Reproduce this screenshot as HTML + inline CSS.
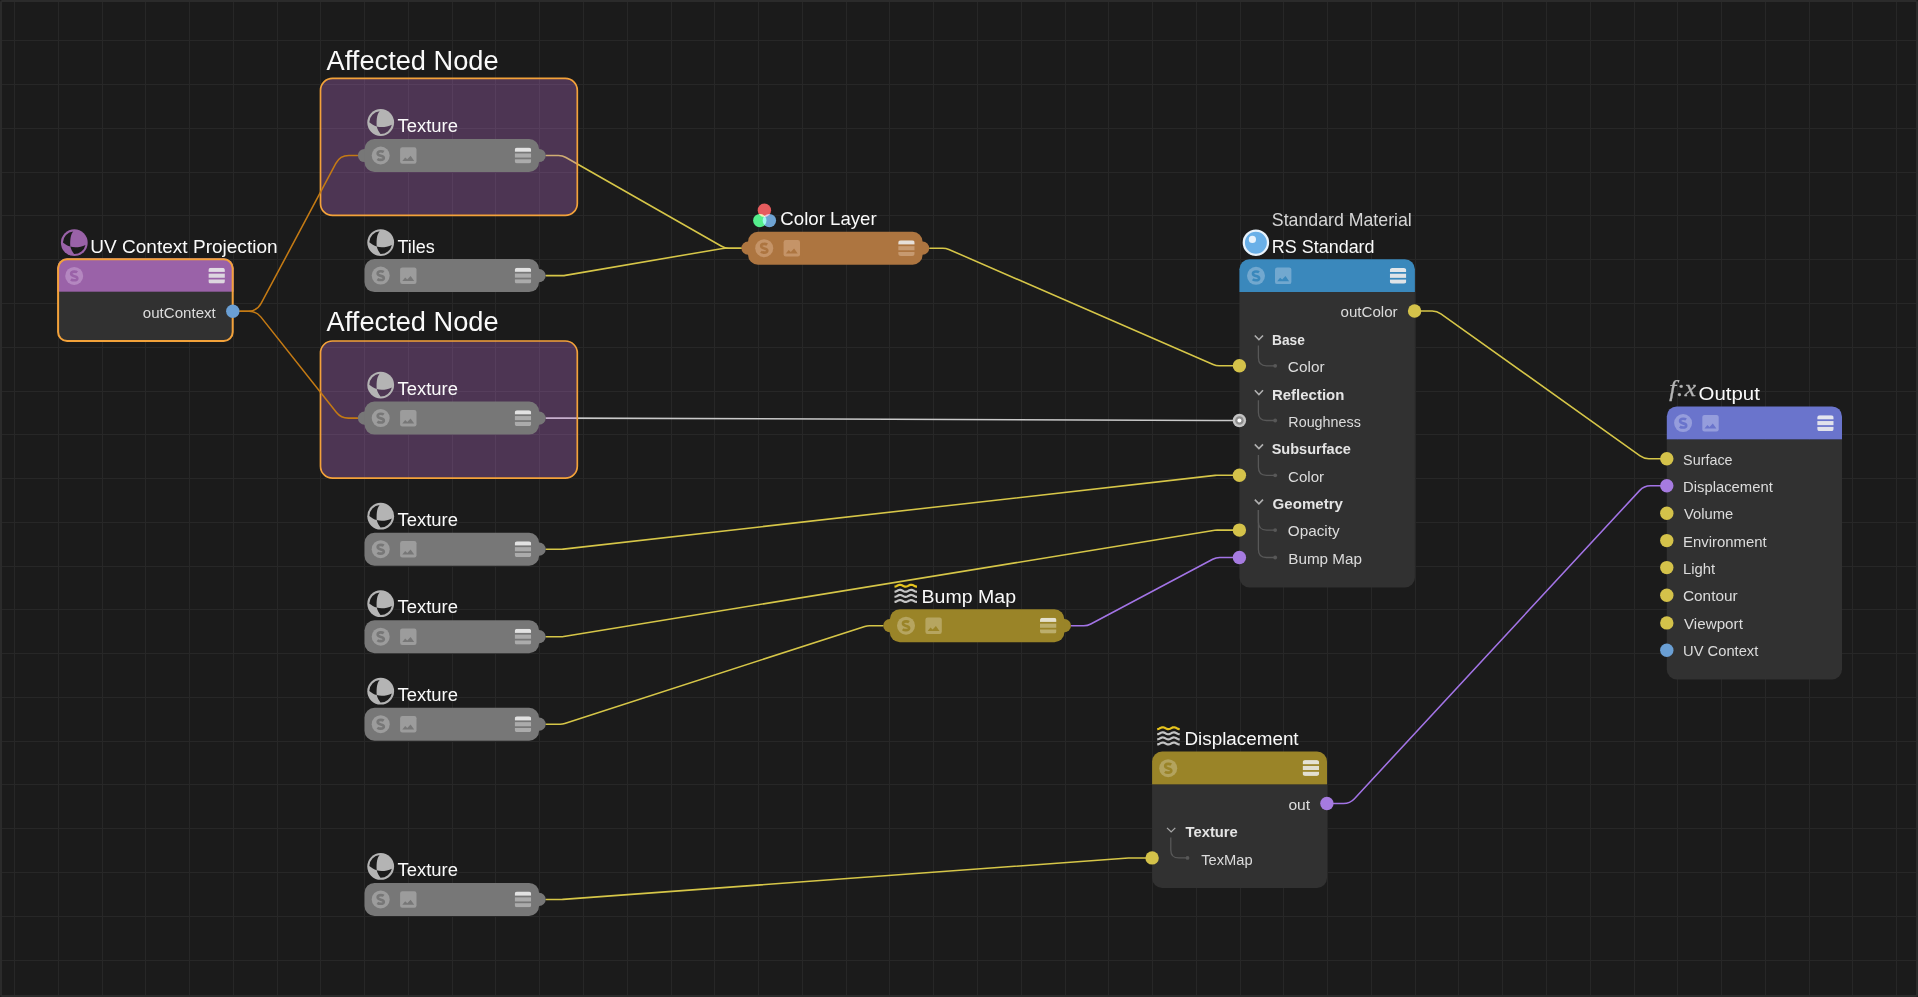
<!DOCTYPE html>
<html><head><meta charset="utf-8"><title>Node Editor</title>
<style>html,body{margin:0;padding:0;background:#1b1b1b;overflow:hidden;width:1918px;height:997px}svg{display:block}</style>
</head><body><svg width="1918" height="997" viewBox="0 0 1918 997"><rect x="0" y="0" width="1918" height="997" fill="#1b1b1b"/><rect x="14" y="0" width="1" height="997" fill="#272727"/><rect x="58" y="0" width="1" height="997" fill="#272727"/><rect x="102" y="0" width="1" height="997" fill="#272727"/><rect x="145" y="0" width="1" height="997" fill="#272727"/><rect x="189" y="0" width="1" height="997" fill="#272727"/><rect x="233" y="0" width="1" height="997" fill="#272727"/><rect x="277" y="0" width="1" height="997" fill="#272727"/><rect x="320" y="0" width="1" height="997" fill="#272727"/><rect x="364" y="0" width="1" height="997" fill="#272727"/><rect x="408" y="0" width="1" height="997" fill="#272727"/><rect x="452" y="0" width="1" height="997" fill="#272727"/><rect x="495" y="0" width="1" height="997" fill="#272727"/><rect x="539" y="0" width="1" height="997" fill="#272727"/><rect x="583" y="0" width="1" height="997" fill="#272727"/><rect x="627" y="0" width="1" height="997" fill="#272727"/><rect x="671" y="0" width="1" height="997" fill="#272727"/><rect x="714" y="0" width="1" height="997" fill="#272727"/><rect x="758" y="0" width="1" height="997" fill="#272727"/><rect x="802" y="0" width="1" height="997" fill="#272727"/><rect x="846" y="0" width="1" height="997" fill="#272727"/><rect x="889" y="0" width="1" height="997" fill="#272727"/><rect x="933" y="0" width="1" height="997" fill="#272727"/><rect x="977" y="0" width="1" height="997" fill="#272727"/><rect x="1021" y="0" width="1" height="997" fill="#272727"/><rect x="1065" y="0" width="1" height="997" fill="#272727"/><rect x="1108" y="0" width="1" height="997" fill="#272727"/><rect x="1152" y="0" width="1" height="997" fill="#272727"/><rect x="1196" y="0" width="1" height="997" fill="#272727"/><rect x="1240" y="0" width="1" height="997" fill="#272727"/><rect x="1283" y="0" width="1" height="997" fill="#272727"/><rect x="1327" y="0" width="1" height="997" fill="#272727"/><rect x="1371" y="0" width="1" height="997" fill="#272727"/><rect x="1415" y="0" width="1" height="997" fill="#272727"/><rect x="1458" y="0" width="1" height="997" fill="#272727"/><rect x="1502" y="0" width="1" height="997" fill="#272727"/><rect x="1546" y="0" width="1" height="997" fill="#272727"/><rect x="1590" y="0" width="1" height="997" fill="#272727"/><rect x="1634" y="0" width="1" height="997" fill="#272727"/><rect x="1677" y="0" width="1" height="997" fill="#272727"/><rect x="1721" y="0" width="1" height="997" fill="#272727"/><rect x="1765" y="0" width="1" height="997" fill="#272727"/><rect x="1809" y="0" width="1" height="997" fill="#272727"/><rect x="1852" y="0" width="1" height="997" fill="#272727"/><rect x="1896" y="0" width="1" height="997" fill="#272727"/><rect x="0" y="40" width="1918" height="1" fill="#272727"/><rect x="0" y="84" width="1918" height="1" fill="#272727"/><rect x="0" y="128" width="1918" height="1" fill="#272727"/><rect x="0" y="172" width="1918" height="1" fill="#272727"/><rect x="0" y="215" width="1918" height="1" fill="#272727"/><rect x="0" y="259" width="1918" height="1" fill="#272727"/><rect x="0" y="303" width="1918" height="1" fill="#272727"/><rect x="0" y="347" width="1918" height="1" fill="#272727"/><rect x="0" y="391" width="1918" height="1" fill="#272727"/><rect x="0" y="434" width="1918" height="1" fill="#272727"/><rect x="0" y="478" width="1918" height="1" fill="#272727"/><rect x="0" y="522" width="1918" height="1" fill="#272727"/><rect x="0" y="566" width="1918" height="1" fill="#272727"/><rect x="0" y="609" width="1918" height="1" fill="#272727"/><rect x="0" y="653" width="1918" height="1" fill="#272727"/><rect x="0" y="697" width="1918" height="1" fill="#272727"/><rect x="0" y="741" width="1918" height="1" fill="#272727"/><rect x="0" y="784" width="1918" height="1" fill="#272727"/><rect x="0" y="828" width="1918" height="1" fill="#272727"/><rect x="0" y="872" width="1918" height="1" fill="#272727"/><rect x="0" y="916" width="1918" height="1" fill="#272727"/><rect x="0" y="960" width="1918" height="1" fill="#272727"/><rect x="1" y="1" width="1916" height="995" rx="1.5" fill="none" stroke="#2b2b2b" stroke-width="2"/><path d="M546,155.5 L558.52,155.50 A15.00,15.00 0 0 1 565.95,157.47 L721.55,246.23 A15.00,15.00 0 0 0 728.98,248.20 L741.3,248.2" fill="none" stroke="#d6c648" stroke-width="1.55" stroke-linecap="round" stroke-linejoin="round"/><path d="M546,418.1 L562.47,418.10 A15.00,15.00 0 0 1 562.53,418.10 L1215.97,420.50 A15.00,15.00 0 0 0 1216.03,420.50 L1239.3,420.5" fill="none" stroke="#c9c9c9" stroke-width="1.55" stroke-linecap="round" stroke-linejoin="round"/><rect x="320.5" y="78.4" width="256.8" height="137.0" rx="12" fill="rgba(194,117,214,0.30)" stroke="#f3a23a" stroke-width="1.7"/><text transform="translate(326.60,69.8) scale(0.9722,1)" x="0" y="0" font-family="'Liberation Sans', sans-serif" font-size="28" font-weight="400" fill="#fafafa">Affected Node</text><rect x="320.5" y="341.0" width="256.8" height="137.2" rx="12" fill="rgba(194,117,214,0.30)" stroke="#f3a23a" stroke-width="1.7"/><text transform="translate(326.60,331.4) scale(0.9722,1)" x="0" y="0" font-family="'Liberation Sans', sans-serif" font-size="28" font-weight="400" fill="#fafafa">Affected Node</text><path d="M239.5,311.2 L248.25,311.20 A14.58,14.58 0 0 0 261.12,303.48 L335.84,163.31 A14.75,14.75 0 0 1 348.85,155.50 L357.7,155.5" fill="none" stroke="#c47a14" stroke-width="1.55" stroke-linecap="round" stroke-linejoin="round"/><path d="M239.5,311.2 L249.05,311.20 A15.00,15.00 0 0 1 260.80,316.88 L336.50,412.42 A15.00,15.00 0 0 0 348.25,418.10 L357.7,418.1" fill="none" stroke="#c47a14" stroke-width="1.55" stroke-linecap="round" stroke-linejoin="round"/><path d="M546,275.6 L562.72,275.60 A15.00,15.00 0 0 0 565.26,275.38 L722.74,248.42 A15.00,15.00 0 0 1 725.28,248.20 L741.3,248.2" fill="none" stroke="#d6c648" stroke-width="1.55" stroke-linecap="round" stroke-linejoin="round"/><path d="M929.8,248.2 L942.88,248.20 A15.00,15.00 0 0 1 948.86,249.45 L1213.14,364.55 A15.00,15.00 0 0 0 1219.12,365.80 L1239.3,365.8" fill="none" stroke="#d6c648" stroke-width="1.55" stroke-linecap="round" stroke-linejoin="round"/><path d="M546,549.2 L561.65,549.20 A15.00,15.00 0 0 0 563.34,549.11 L1215.16,475.39 A15.00,15.00 0 0 1 1216.85,475.30 L1239.3,475.3" fill="none" stroke="#d6c648" stroke-width="1.55" stroke-linecap="round" stroke-linejoin="round"/><path d="M546,636.7 L561.28,636.70 A15.00,15.00 0 0 0 563.70,636.50 L1214.80,530.30 A15.00,15.00 0 0 1 1217.22,530.10 L1239.3,530.1" fill="none" stroke="#d6c648" stroke-width="1.55" stroke-linecap="round" stroke-linejoin="round"/><path d="M546,724.2 L560.13,724.20 A15.00,15.00 0 0 0 564.75,723.47 L864.75,626.43 A15.00,15.00 0 0 1 869.37,625.70 L883,625.7" fill="none" stroke="#d6c648" stroke-width="1.55" stroke-linecap="round" stroke-linejoin="round"/><path d="M1071.3,625.7 L1083.77,625.70 A15.00,15.00 0 0 0 1090.80,623.95 L1212.70,559.25 A15.00,15.00 0 0 1 1219.73,557.50 L1239.3,557.5" fill="none" stroke="#a374e6" stroke-width="1.55" stroke-linecap="round" stroke-linejoin="round"/><path d="M1414.5,311 L1432.20,311.00 A15.00,15.00 0 0 1 1440.91,313.79 L1640.09,455.91 A15.00,15.00 0 0 0 1648.80,458.70 L1666.8,458.7" fill="none" stroke="#d6c648" stroke-width="1.55" stroke-linecap="round" stroke-linejoin="round"/><path d="M1326.8,803.5 L1343.44,803.50 A15.00,15.00 0 0 0 1354.45,798.69 L1639.55,490.61 A15.00,15.00 0 0 1 1650.56,485.80 L1666.8,485.8" fill="none" stroke="#a374e6" stroke-width="1.55" stroke-linecap="round" stroke-linejoin="round"/><path d="M546,899.4 L561.95,899.40 A15.00,15.00 0 0 0 563.05,899.36 L1128.45,857.94 A15.00,15.00 0 0 1 1129.55,857.90 L1152,857.9" fill="none" stroke="#d6c648" stroke-width="1.55" stroke-linecap="round" stroke-linejoin="round"/><circle cx="380.7" cy="122.5" r="13.4" fill="#b4b4b4"/><path d="M379.70,111.20 C377.30,113.90 376.30,118.30 376.70,126.40 C374.10,125.50 371.50,124.10 369.30,122.20 A11.4,11.4 0 0 1 379.70,111.20 Z" fill="#4d3653"/><path d="M376.70,126.40 C380.90,127.80 387.30,127.10 391.85,124.80 A11.4,11.4 0 0 1 380.50,133.90 C378.80,131.70 377.40,129.10 376.70,126.40 Z" fill="#4d3653"/><text transform="translate(397.50,132.0) scale(0.9710,1)" x="0" y="0" font-family="'Liberation Sans', sans-serif" font-size="19" font-weight="400" fill="#fafafa">Texture</text><circle cx="364.5" cy="155.5" r="6.6" fill="#777777"/><circle cx="539.1" cy="155.5" r="6.6" fill="#777777"/><rect x="364.5" y="139.0" width="174.6" height="33.0" rx="10" fill="#777777"/><circle cx="380.7" cy="155.5" r="9" fill="#9c9c9c"/><path d="M383.74,151.91 C383.00,151.36 381.90,151.18 380.79,151.18 C378.77,151.18 377.66,152.19 377.66,153.38 C377.66,154.95 379.14,155.41 380.79,155.78 C382.54,156.14 383.83,156.70 383.83,158.08 C383.83,159.46 382.54,159.92 380.61,159.92 C379.32,159.92 378.12,159.55 377.39,159.00" fill="none" stroke="#777777" stroke-width="2.6"/><rect x="400.1" y="147.3" width="16.4" height="16.5" rx="2.2" fill="#9c9c9c"/><path d="M402.3,160.9 L405.20000000000005,157.4 L407.3,159.3 L410.6,155.8 L414.20000000000005,160.9 Z" fill="#777777"/><clipPath id="mc5147_1555"><rect x="514.7" y="147.6" width="16.5" height="15.8" rx="2.6"/></clipPath><g clip-path="url(#mc5147_1555)"><rect x="514.7" y="147.6" width="16.5" height="4.1" fill="#e2e2e2"/><rect x="514.7" y="153.45" width="16.5" height="4.1" fill="#ababab"/><rect x="514.7" y="159.29999999999998" width="16.5" height="4.1" fill="#ababab"/></g><circle cx="380.7" cy="242.60000000000002" r="13.4" fill="#b4b4b4"/><path d="M379.70,231.30 C377.30,234.00 376.30,238.40 376.70,246.50 C374.10,245.60 371.50,244.20 369.30,242.30 A11.4,11.4 0 0 1 379.70,231.30 Z" fill="#1b1b1b"/><path d="M376.70,246.50 C380.90,247.90 387.30,247.20 391.85,244.90 A11.4,11.4 0 0 1 380.50,254.00 C378.80,251.80 377.40,249.20 376.70,246.50 Z" fill="#1b1b1b"/><text transform="translate(397.50,252.70000000000002) scale(0.9487,1)" x="0" y="0" font-family="'Liberation Sans', sans-serif" font-size="19" font-weight="400" fill="#fafafa">Tiles</text><circle cx="539.1" cy="275.6" r="6.6" fill="#777777"/><rect x="364.5" y="259.1" width="174.6" height="33.0" rx="10" fill="#777777"/><circle cx="380.7" cy="275.6" r="9" fill="#9c9c9c"/><path d="M383.74,272.01 C383.00,271.46 381.90,271.28 380.79,271.28 C378.77,271.28 377.66,272.29 377.66,273.48 C377.66,275.05 379.14,275.51 380.79,275.88 C382.54,276.24 383.83,276.80 383.83,278.18 C383.83,279.56 382.54,280.02 380.61,280.02 C379.32,280.02 378.12,279.65 377.39,279.10" fill="none" stroke="#777777" stroke-width="2.6"/><rect x="400.1" y="267.40000000000003" width="16.4" height="16.5" rx="2.2" fill="#9c9c9c"/><path d="M402.3,281.00000000000006 L405.20000000000005,277.50000000000006 L407.3,279.40000000000003 L410.6,275.90000000000003 L414.20000000000005,281.00000000000006 Z" fill="#777777"/><clipPath id="mc5147_2756"><rect x="514.7" y="267.70000000000005" width="16.5" height="15.8" rx="2.6"/></clipPath><g clip-path="url(#mc5147_2756)"><rect x="514.7" y="267.70000000000005" width="16.5" height="4.1" fill="#e2e2e2"/><rect x="514.7" y="273.55000000000007" width="16.5" height="4.1" fill="#ababab"/><rect x="514.7" y="279.40000000000003" width="16.5" height="4.1" fill="#ababab"/></g><circle cx="380.7" cy="385.1" r="13.4" fill="#b4b4b4"/><path d="M379.70,373.80 C377.30,376.50 376.30,380.90 376.70,389.00 C374.10,388.10 371.50,386.70 369.30,384.80 A11.4,11.4 0 0 1 379.70,373.80 Z" fill="#4d3653"/><path d="M376.70,389.00 C380.90,390.40 387.30,389.70 391.85,387.40 A11.4,11.4 0 0 1 380.50,396.50 C378.80,394.30 377.40,391.70 376.70,389.00 Z" fill="#4d3653"/><text transform="translate(397.50,394.6) scale(0.9710,1)" x="0" y="0" font-family="'Liberation Sans', sans-serif" font-size="19" font-weight="400" fill="#fafafa">Texture</text><circle cx="364.5" cy="418.1" r="6.6" fill="#777777"/><circle cx="539.1" cy="418.1" r="6.6" fill="#777777"/><rect x="364.5" y="401.6" width="174.6" height="33.0" rx="10" fill="#777777"/><circle cx="380.7" cy="418.1" r="9" fill="#9c9c9c"/><path d="M383.74,414.51 C383.00,413.96 381.90,413.78 380.79,413.78 C378.77,413.78 377.66,414.79 377.66,415.98 C377.66,417.55 379.14,418.01 380.79,418.38 C382.54,418.74 383.83,419.30 383.83,420.68 C383.83,422.06 382.54,422.52 380.61,422.52 C379.32,422.52 378.12,422.15 377.39,421.60" fill="none" stroke="#777777" stroke-width="2.6"/><rect x="400.1" y="409.90000000000003" width="16.4" height="16.5" rx="2.2" fill="#9c9c9c"/><path d="M402.3,423.50000000000006 L405.20000000000005,420.00000000000006 L407.3,421.90000000000003 L410.6,418.40000000000003 L414.20000000000005,423.50000000000006 Z" fill="#777777"/><clipPath id="mc5147_4181"><rect x="514.7" y="410.20000000000005" width="16.5" height="15.8" rx="2.6"/></clipPath><g clip-path="url(#mc5147_4181)"><rect x="514.7" y="410.20000000000005" width="16.5" height="4.1" fill="#e2e2e2"/><rect x="514.7" y="416.05000000000007" width="16.5" height="4.1" fill="#ababab"/><rect x="514.7" y="421.90000000000003" width="16.5" height="4.1" fill="#ababab"/></g><circle cx="380.7" cy="516.2" r="13.4" fill="#b4b4b4"/><path d="M379.70,504.90 C377.30,507.60 376.30,512.00 376.70,520.10 C374.10,519.20 371.50,517.80 369.30,515.90 A11.4,11.4 0 0 1 379.70,504.90 Z" fill="#1b1b1b"/><path d="M376.70,520.10 C380.90,521.50 387.30,520.80 391.85,518.50 A11.4,11.4 0 0 1 380.50,527.60 C378.80,525.40 377.40,522.80 376.70,520.10 Z" fill="#1b1b1b"/><text transform="translate(397.50,525.7) scale(0.9710,1)" x="0" y="0" font-family="'Liberation Sans', sans-serif" font-size="19" font-weight="400" fill="#fafafa">Texture</text><circle cx="539.1" cy="549.2" r="6.6" fill="#777777"/><rect x="364.5" y="532.7" width="174.6" height="33.0" rx="10" fill="#777777"/><circle cx="380.7" cy="549.2" r="9" fill="#9c9c9c"/><path d="M383.74,545.61 C383.00,545.06 381.90,544.88 380.79,544.88 C378.77,544.88 377.66,545.89 377.66,547.08 C377.66,548.65 379.14,549.11 380.79,549.48 C382.54,549.84 383.83,550.40 383.83,551.78 C383.83,553.16 382.54,553.62 380.61,553.62 C379.32,553.62 378.12,553.25 377.39,552.70" fill="none" stroke="#777777" stroke-width="2.6"/><rect x="400.1" y="541.0" width="16.4" height="16.5" rx="2.2" fill="#9c9c9c"/><path d="M402.3,554.6 L405.20000000000005,551.1 L407.3,553.0 L410.6,549.5 L414.20000000000005,554.6 Z" fill="#777777"/><clipPath id="mc5147_5492"><rect x="514.7" y="541.3000000000001" width="16.5" height="15.8" rx="2.6"/></clipPath><g clip-path="url(#mc5147_5492)"><rect x="514.7" y="541.3000000000001" width="16.5" height="4.1" fill="#e2e2e2"/><rect x="514.7" y="547.1500000000001" width="16.5" height="4.1" fill="#ababab"/><rect x="514.7" y="553.0000000000001" width="16.5" height="4.1" fill="#ababab"/></g><circle cx="380.7" cy="603.7" r="13.4" fill="#b4b4b4"/><path d="M379.70,592.40 C377.30,595.10 376.30,599.50 376.70,607.60 C374.10,606.70 371.50,605.30 369.30,603.40 A11.4,11.4 0 0 1 379.70,592.40 Z" fill="#1b1b1b"/><path d="M376.70,607.60 C380.90,609.00 387.30,608.30 391.85,606.00 A11.4,11.4 0 0 1 380.50,615.10 C378.80,612.90 377.40,610.30 376.70,607.60 Z" fill="#1b1b1b"/><text transform="translate(397.50,613.2) scale(0.9710,1)" x="0" y="0" font-family="'Liberation Sans', sans-serif" font-size="19" font-weight="400" fill="#fafafa">Texture</text><circle cx="539.1" cy="636.7" r="6.6" fill="#777777"/><rect x="364.5" y="620.2" width="174.6" height="33.0" rx="10" fill="#777777"/><circle cx="380.7" cy="636.7" r="9" fill="#9c9c9c"/><path d="M383.74,633.11 C383.00,632.56 381.90,632.38 380.79,632.38 C378.77,632.38 377.66,633.39 377.66,634.58 C377.66,636.15 379.14,636.61 380.79,636.98 C382.54,637.34 383.83,637.90 383.83,639.28 C383.83,640.66 382.54,641.12 380.61,641.12 C379.32,641.12 378.12,640.75 377.39,640.20" fill="none" stroke="#777777" stroke-width="2.6"/><rect x="400.1" y="628.5" width="16.4" height="16.5" rx="2.2" fill="#9c9c9c"/><path d="M402.3,642.1 L405.20000000000005,638.6 L407.3,640.5 L410.6,637.0 L414.20000000000005,642.1 Z" fill="#777777"/><clipPath id="mc5147_6367"><rect x="514.7" y="628.8000000000001" width="16.5" height="15.8" rx="2.6"/></clipPath><g clip-path="url(#mc5147_6367)"><rect x="514.7" y="628.8000000000001" width="16.5" height="4.1" fill="#e2e2e2"/><rect x="514.7" y="634.6500000000001" width="16.5" height="4.1" fill="#ababab"/><rect x="514.7" y="640.5000000000001" width="16.5" height="4.1" fill="#ababab"/></g><circle cx="380.7" cy="691.2" r="13.4" fill="#b4b4b4"/><path d="M379.70,679.90 C377.30,682.60 376.30,687.00 376.70,695.10 C374.10,694.20 371.50,692.80 369.30,690.90 A11.4,11.4 0 0 1 379.70,679.90 Z" fill="#1b1b1b"/><path d="M376.70,695.10 C380.90,696.50 387.30,695.80 391.85,693.50 A11.4,11.4 0 0 1 380.50,702.60 C378.80,700.40 377.40,697.80 376.70,695.10 Z" fill="#1b1b1b"/><text transform="translate(397.50,700.7) scale(0.9710,1)" x="0" y="0" font-family="'Liberation Sans', sans-serif" font-size="19" font-weight="400" fill="#fafafa">Texture</text><circle cx="539.1" cy="724.2" r="6.6" fill="#777777"/><rect x="364.5" y="707.7" width="174.6" height="33.0" rx="10" fill="#777777"/><circle cx="380.7" cy="724.2" r="9" fill="#9c9c9c"/><path d="M383.74,720.61 C383.00,720.06 381.90,719.88 380.79,719.88 C378.77,719.88 377.66,720.89 377.66,722.08 C377.66,723.65 379.14,724.11 380.79,724.48 C382.54,724.84 383.83,725.40 383.83,726.78 C383.83,728.16 382.54,728.62 380.61,728.62 C379.32,728.62 378.12,728.25 377.39,727.70" fill="none" stroke="#777777" stroke-width="2.6"/><rect x="400.1" y="716.0" width="16.4" height="16.5" rx="2.2" fill="#9c9c9c"/><path d="M402.3,729.6 L405.20000000000005,726.1 L407.3,728.0 L410.6,724.5 L414.20000000000005,729.6 Z" fill="#777777"/><clipPath id="mc5147_7242"><rect x="514.7" y="716.3000000000001" width="16.5" height="15.8" rx="2.6"/></clipPath><g clip-path="url(#mc5147_7242)"><rect x="514.7" y="716.3000000000001" width="16.5" height="4.1" fill="#e2e2e2"/><rect x="514.7" y="722.1500000000001" width="16.5" height="4.1" fill="#ababab"/><rect x="514.7" y="728.0000000000001" width="16.5" height="4.1" fill="#ababab"/></g><circle cx="380.7" cy="866.4" r="13.4" fill="#b4b4b4"/><path d="M379.70,855.10 C377.30,857.80 376.30,862.20 376.70,870.30 C374.10,869.40 371.50,868.00 369.30,866.10 A11.4,11.4 0 0 1 379.70,855.10 Z" fill="#1b1b1b"/><path d="M376.70,870.30 C380.90,871.70 387.30,871.00 391.85,868.70 A11.4,11.4 0 0 1 380.50,877.80 C378.80,875.60 377.40,873.00 376.70,870.30 Z" fill="#1b1b1b"/><text transform="translate(397.50,875.9) scale(0.9710,1)" x="0" y="0" font-family="'Liberation Sans', sans-serif" font-size="19" font-weight="400" fill="#fafafa">Texture</text><circle cx="539.1" cy="899.4" r="6.6" fill="#777777"/><rect x="364.5" y="882.9" width="174.6" height="33.0" rx="10" fill="#777777"/><circle cx="380.7" cy="899.4" r="9" fill="#9c9c9c"/><path d="M383.74,895.81 C383.00,895.26 381.90,895.08 380.79,895.08 C378.77,895.08 377.66,896.09 377.66,897.28 C377.66,898.85 379.14,899.31 380.79,899.68 C382.54,900.04 383.83,900.60 383.83,901.98 C383.83,903.36 382.54,903.82 380.61,903.82 C379.32,903.82 378.12,903.45 377.39,902.90" fill="none" stroke="#777777" stroke-width="2.6"/><rect x="400.1" y="891.1999999999999" width="16.4" height="16.5" rx="2.2" fill="#9c9c9c"/><path d="M402.3,904.8 L405.20000000000005,901.3 L407.3,903.1999999999999 L410.6,899.6999999999999 L414.20000000000005,904.8 Z" fill="#777777"/><clipPath id="mc5147_8994"><rect x="514.7" y="891.5" width="16.5" height="15.8" rx="2.6"/></clipPath><g clip-path="url(#mc5147_8994)"><rect x="514.7" y="891.5" width="16.5" height="4.1" fill="#e2e2e2"/><rect x="514.7" y="897.35" width="16.5" height="4.1" fill="#ababab"/><rect x="514.7" y="903.2" width="16.5" height="4.1" fill="#ababab"/></g><g><g style="isolation:isolate"><circle cx="764.4" cy="210.2" r="6.7" fill="#e65c5e" style="mix-blend-mode:screen"/><circle cx="759.8" cy="220.6" r="6.7" fill="#55ee8c" style="mix-blend-mode:screen"/><circle cx="769.4" cy="220.6" r="6.7" fill="#6ea3d3" style="mix-blend-mode:screen"/></g><text transform="translate(780.32,225) scale(0.9814,1)" x="0" y="0" font-family="'Liberation Sans', sans-serif" font-size="19" font-weight="400" fill="#fafafa">Color Layer</text><circle cx="748" cy="248.2" r="6.6" fill="#ad7540"/><circle cx="922.6" cy="248.2" r="6.6" fill="#ad7540"/><rect x="748" y="231.7" width="174.6" height="33.0" rx="10" fill="#ad7540"/><circle cx="764.2" cy="248.2" r="9" fill="#c59468"/><path d="M767.24,244.61 C766.50,244.06 765.40,243.88 764.29,243.88 C762.27,243.88 761.16,244.89 761.16,246.08 C761.16,247.65 762.64,248.11 764.29,248.48 C766.04,248.84 767.33,249.40 767.33,250.78 C767.33,252.16 766.04,252.62 764.11,252.62 C762.82,252.62 761.62,252.25 760.89,251.70" fill="none" stroke="#ad7540" stroke-width="2.6"/><rect x="783.6" y="240.0" width="16.4" height="16.5" rx="2.2" fill="#c59468"/><path d="M785.8000000000001,253.6 L788.7,250.1 L790.8000000000001,252.0 L794.1,248.5 L797.7,253.6 Z" fill="#ad7540"/><clipPath id="mc8982_2482"><rect x="898.2" y="240.29999999999998" width="16.5" height="15.8" rx="2.6"/></clipPath><g clip-path="url(#mc8982_2482)"><rect x="898.2" y="240.29999999999998" width="16.5" height="4.1" fill="#e6e0da"/><rect x="898.2" y="246.14999999999998" width="16.5" height="4.1" fill="#c79a70"/><rect x="898.2" y="251.99999999999997" width="16.5" height="4.1" fill="#c79a70"/></g><polyline points="894.50,586.65 895.25,586.57 896.00,586.33 896.75,585.98 897.50,585.58 898.25,585.20 899.00,584.91 899.75,584.76 900.50,584.78 901.25,584.96 902.00,585.27 902.75,585.66 903.50,586.05 904.25,586.39 905.00,586.60 905.75,586.65 906.50,586.53 907.25,586.26 908.00,585.90 908.75,585.50 909.50,585.14 910.25,584.87 911.00,584.75 911.75,584.80 912.50,585.01 913.25,585.35 914.00,585.74 914.75,586.13 915.50,586.44 916.25,586.62 917.00,586.64" fill="none" stroke="#e6c41e" stroke-width="2.2" stroke-linejoin="round"/><polyline points="894.50,591.75 895.25,591.67 896.00,591.43 896.75,591.08 897.50,590.68 898.25,590.30 899.00,590.01 899.75,589.86 900.50,589.88 901.25,590.06 902.00,590.37 902.75,590.76 903.50,591.15 904.25,591.49 905.00,591.70 905.75,591.75 906.50,591.63 907.25,591.36 908.00,591.00 908.75,590.60 909.50,590.24 910.25,589.97 911.00,589.85 911.75,589.90 912.50,590.11 913.25,590.45 914.00,590.84 914.75,591.23 915.50,591.54 916.25,591.72 917.00,591.74" fill="none" stroke="#c4c4c4" stroke-width="2.2" stroke-linejoin="round"/><polyline points="894.50,596.85 895.25,596.77 896.00,596.53 896.75,596.18 897.50,595.78 898.25,595.40 899.00,595.11 899.75,594.96 900.50,594.98 901.25,595.16 902.00,595.47 902.75,595.86 903.50,596.25 904.25,596.59 905.00,596.80 905.75,596.85 906.50,596.73 907.25,596.46 908.00,596.10 908.75,595.70 909.50,595.34 910.25,595.07 911.00,594.95 911.75,595.00 912.50,595.21 913.25,595.55 914.00,595.94 914.75,596.33 915.50,596.64 916.25,596.82 917.00,596.84" fill="none" stroke="#c4c4c4" stroke-width="2.2" stroke-linejoin="round"/><polyline points="894.50,601.95 895.25,601.87 896.00,601.63 896.75,601.28 897.50,600.88 898.25,600.50 899.00,600.21 899.75,600.06 900.50,600.08 901.25,600.26 902.00,600.57 902.75,600.96 903.50,601.35 904.25,601.69 905.00,601.90 905.75,601.95 906.50,601.83 907.25,601.56 908.00,601.20 908.75,600.80 909.50,600.44 910.25,600.17 911.00,600.05 911.75,600.10 912.50,600.31 913.25,600.65 914.00,601.04 914.75,601.43 915.50,601.74 916.25,601.92 917.00,601.94" fill="none" stroke="#c4c4c4" stroke-width="2.2" stroke-linejoin="round"/><text transform="translate(921.57,603.2) scale(1.0289,1)" x="0" y="0" font-family="'Liberation Sans', sans-serif" font-size="19" font-weight="400" fill="#fafafa">Bump Map</text><circle cx="889.8" cy="625.7" r="6.6" fill="#9a8428"/><circle cx="1064.3999999999999" cy="625.7" r="6.6" fill="#9a8428"/><rect x="889.8" y="609.2" width="174.6" height="33.0" rx="10" fill="#9a8428"/><circle cx="906.0" cy="625.7" r="9" fill="#b6a560"/><path d="M909.04,622.11 C908.30,621.56 907.20,621.38 906.09,621.38 C904.07,621.38 902.96,622.39 902.96,623.58 C902.96,625.15 904.44,625.61 906.09,625.98 C907.84,626.34 909.13,626.90 909.13,628.28 C909.13,629.66 907.84,630.12 905.91,630.12 C904.62,630.12 903.42,629.75 902.69,629.20" fill="none" stroke="#9a8428" stroke-width="2.6"/><rect x="925.4" y="617.5" width="16.4" height="16.5" rx="2.2" fill="#b6a560"/><path d="M927.6,631.1 L930.5,627.6 L932.6,629.5 L935.9,626.0 L939.5,631.1 Z" fill="#9a8428"/><clipPath id="mc10400_6257"><rect x="1040.0" y="617.8000000000001" width="16.5" height="15.8" rx="2.6"/></clipPath><g clip-path="url(#mc10400_6257)"><rect x="1040.0" y="617.8000000000001" width="16.5" height="4.1" fill="#e4e0cc"/><rect x="1040.0" y="623.6500000000001" width="16.5" height="4.1" fill="#bcae6c"/><rect x="1040.0" y="629.5000000000001" width="16.5" height="4.1" fill="#bcae6c"/></g><circle cx="74.3" cy="242.7" r="13.4" fill="#9a62a8"/><path d="M73.30,231.40 C70.90,234.10 69.90,238.50 70.30,246.60 C67.70,245.70 65.10,244.30 62.90,242.40 A11.4,11.4 0 0 1 73.30,231.40 Z" fill="#1b1b1b"/><path d="M70.30,246.60 C74.50,248.00 80.90,247.30 85.45,245.00 A11.4,11.4 0 0 1 74.10,254.10 C72.40,251.90 71.00,249.30 70.30,246.60 Z" fill="#1b1b1b"/><text transform="translate(90.30,253) scale(1.0022,1)" x="0" y="0" font-family="'Liberation Sans', sans-serif" font-size="19" font-weight="400" fill="#fafafa">UV Context Projection</text><clipPath id="uvc"><rect x="57.1" y="258.3" width="176.6" height="83.7" rx="10"/></clipPath><g clip-path="url(#uvc)"><rect x="57" y="258" width="177" height="34" fill="#9a62a8"/><rect x="57" y="291.7" width="177" height="51" fill="#313131"/></g><rect x="58.1" y="259.3" width="174.6" height="81.7" rx="9" fill="none" stroke="#f3a23a" stroke-width="2"/><circle cx="74.2" cy="275.9" r="9" fill="#b487c0"/><path d="M77.24,272.31 C76.50,271.76 75.40,271.58 74.29,271.58 C72.27,271.58 71.16,272.59 71.16,273.78 C71.16,275.35 72.64,275.81 74.29,276.18 C76.04,276.54 77.33,277.10 77.33,278.48 C77.33,279.86 76.04,280.32 74.11,280.32 C72.82,280.32 71.62,279.95 70.89,279.40" fill="none" stroke="#9a62a8" stroke-width="2.6"/><clipPath id="mc2084_2757"><rect x="208.4" y="267.8" width="16.5" height="15.8" rx="2.6"/></clipPath><g clip-path="url(#mc2084_2757)"><rect x="208.4" y="267.8" width="16.5" height="4.1" fill="#e2dce4"/><rect x="208.4" y="273.65000000000003" width="16.5" height="4.1" fill="#ddd6df"/><rect x="208.4" y="279.5" width="16.5" height="4.1" fill="#ddd6df"/></g><text transform="translate(142.80,317.8) scale(1.0068,1)" x="0" y="0" font-family="'Liberation Sans', sans-serif" font-size="15" font-weight="400" fill="#dcdcdc">outContext</text><circle cx="232.8" cy="311.2" r="6.7" fill="#6a9fd4"/><circle cx="1255.9" cy="242.7" r="12.1" fill="#6ab0e8" stroke="#e9f3fc" stroke-width="2.3"/><circle cx="1252.4" cy="239.4" r="3.6" fill="#e9f3fc"/><text transform="translate(1271.81,225.6) scale(0.9864,1)" x="0" y="0" font-family="'Liberation Sans', sans-serif" font-size="18" font-weight="400" fill="#d6d6d6">Standard Material</text><text transform="translate(1271.86,252.9) scale(0.9449,1)" x="0" y="0" font-family="'Liberation Sans', sans-serif" font-size="19" font-weight="400" fill="#fafafa">RS Standard</text><clipPath id="rsc"><rect x="1239.4" y="259.2" width="175.5" height="328.3" rx="10"/></clipPath><g clip-path="url(#rsc)"><rect x="1239" y="259" width="176" height="33" fill="#3a88bc"/><rect x="1239" y="292" width="176" height="296" fill="#313131"/></g><circle cx="1256" cy="275.8" r="9" fill="#72a8cf"/><path d="M1259.04,272.21 C1258.30,271.66 1257.20,271.48 1256.09,271.48 C1254.07,271.48 1252.96,272.49 1252.96,273.68 C1252.96,275.25 1254.44,275.71 1256.09,276.08 C1257.84,276.44 1259.13,277.00 1259.13,278.38 C1259.13,279.76 1257.84,280.22 1255.91,280.22 C1254.62,280.22 1253.42,279.85 1252.69,279.30" fill="none" stroke="#3a88bc" stroke-width="2.6"/><rect x="1275" y="267.6" width="16.4" height="16.5" rx="2.2" fill="#72a8cf"/><path d="M1277.2,281.20000000000005 L1280.1,277.70000000000005 L1282.2,279.6 L1285.5,276.1 L1289.1,281.20000000000005 Z" fill="#3a88bc"/><clipPath id="mc13898_2758"><rect x="1389.8" y="267.90000000000003" width="16.5" height="15.8" rx="2.6"/></clipPath><g clip-path="url(#mc13898_2758)"><rect x="1389.8" y="267.90000000000003" width="16.5" height="4.1" fill="#e2e6ea"/><rect x="1389.8" y="273.75000000000006" width="16.5" height="4.1" fill="#dfe3e7"/><rect x="1389.8" y="279.6" width="16.5" height="4.1" fill="#dfe3e7"/></g><text transform="translate(1340.50,317.3) scale(1.0088,1)" x="0" y="0" font-family="'Liberation Sans', sans-serif" font-size="15" font-weight="400" fill="#dcdcdc">outColor</text><text transform="translate(1271.99,344.9) scale(0.9143,1)" x="0" y="0" font-family="'Liberation Sans', sans-serif" font-size="15" font-weight="700" fill="#e4e4e4">Base</text><path d="M1254.8,335.5 L1258.9,339.7 L1263.0,335.5" fill="none" stroke="#b0b0b0" stroke-width="1.6"/><text transform="translate(1287.87,371.9) scale(1.0257,1)" x="0" y="0" font-family="'Liberation Sans', sans-serif" font-size="15" font-weight="400" fill="#dcdcdc">Color</text><text transform="translate(1272.00,399.7) scale(0.9986,1)" x="0" y="0" font-family="'Liberation Sans', sans-serif" font-size="15" font-weight="700" fill="#e4e4e4">Reflection</text><path d="M1254.8,390.3 L1258.9,394.5 L1263.0,390.3" fill="none" stroke="#b0b0b0" stroke-width="1.6"/><text transform="translate(1288.34,426.8) scale(0.9560,1)" x="0" y="0" font-family="'Liberation Sans', sans-serif" font-size="15" font-weight="400" fill="#dcdcdc">Roughness</text><text transform="translate(1271.63,453.8) scale(0.9700,1)" x="0" y="0" font-family="'Liberation Sans', sans-serif" font-size="15" font-weight="700" fill="#e4e4e4">Subsurface</text><path d="M1254.8,444.40000000000003 L1258.9,448.6 L1263.0,444.40000000000003" fill="none" stroke="#b0b0b0" stroke-width="1.6"/><text transform="translate(1287.99,481.5) scale(1.0086,1)" x="0" y="0" font-family="'Liberation Sans', sans-serif" font-size="15" font-weight="400" fill="#dcdcdc">Color</text><text transform="translate(1272.60,509) scale(1.0057,1)" x="0" y="0" font-family="'Liberation Sans', sans-serif" font-size="15" font-weight="700" fill="#e4e4e4">Geometry</text><path d="M1254.8,499.6 L1258.9,503.8 L1263.0,499.6" fill="none" stroke="#b0b0b0" stroke-width="1.6"/><text transform="translate(1287.78,536.2) scale(1.0200,1)" x="0" y="0" font-family="'Liberation Sans', sans-serif" font-size="15" font-weight="400" fill="#dcdcdc">Opacity</text><text transform="translate(1288.28,563.6) scale(1.0169,1)" x="0" y="0" font-family="'Liberation Sans', sans-serif" font-size="15" font-weight="400" fill="#dcdcdc">Bump Map</text><path d="M1258.4,345.5 L1258.4,357.8 Q1258.4,365.8 1266.4,365.8 L1275.2,365.8" fill="none" stroke="#585858" stroke-width="1.3"/><circle cx="1275.2" cy="365.8" r="1.9" fill="#585858"/><path d="M1258.4,400.3 L1258.4,412.5 Q1258.4,420.5 1266.4,420.5 L1275.2,420.5" fill="none" stroke="#585858" stroke-width="1.3"/><circle cx="1275.2" cy="420.5" r="1.9" fill="#585858"/><path d="M1258.4,455.1 L1258.4,467.3 Q1258.4,475.3 1266.4,475.3 L1275.2,475.3" fill="none" stroke="#585858" stroke-width="1.3"/><circle cx="1275.2" cy="475.3" r="1.9" fill="#585858"/><path d="M1258.4,509.9 L1258.4,522.1 Q1258.4,530.1 1266.4,530.1 L1275.2,530.1" fill="none" stroke="#585858" stroke-width="1.3"/><circle cx="1275.2" cy="530.1" r="1.9" fill="#585858"/><path d="M1258.4,509.9 L1258.4,549.5 Q1258.4,557.5 1266.4,557.5 L1275.2,557.5" fill="none" stroke="#585858" stroke-width="1.3"/><circle cx="1275.2" cy="557.5" r="1.9" fill="#585858"/><circle cx="1239.4" cy="365.8" r="6.7" fill="#d4c24a"/><circle cx="1239.4" cy="475.3" r="6.7" fill="#d4c24a"/><circle cx="1239.4" cy="530.1" r="6.7" fill="#d4c24a"/><circle cx="1239.4" cy="557.5" r="6.7" fill="#a67be0"/><circle cx="1239.4" cy="420.5" r="6.7" fill="#c4c4c4"/><circle cx="1239.4" cy="420.5" r="4.3" fill="#8e8e8e"/><circle cx="1239.4" cy="420.5" r="2" fill="#ffffff"/><circle cx="1414.6" cy="311" r="6.7" fill="#d4c24a"/><text transform="translate(1669.2,396.4) scale(1.1,1)" x="0" y="0" font-family="'Liberation Serif', serif" font-style="italic" font-size="23" fill="#b4b4b4" stroke="#b4b4b4" stroke-width="0.3">f:x</text><text transform="translate(1698.52,399.6) scale(1.0750,1)" x="0" y="0" font-family="'Liberation Sans', sans-serif" font-size="19" font-weight="400" fill="#fafafa">Output</text><clipPath id="ouc"><rect x="1666.8" y="406.4" width="175.2" height="273.1" rx="10"/></clipPath><g clip-path="url(#ouc)"><rect x="1666" y="406" width="177" height="33.6" fill="#6a74cc"/><rect x="1666" y="439.6" width="177" height="241" fill="#313131"/></g><circle cx="1683.1" cy="423.1" r="9" fill="#959ddc"/><path d="M1686.14,419.51 C1685.40,418.96 1684.30,418.78 1683.19,418.78 C1681.17,418.78 1680.06,419.79 1680.06,420.98 C1680.06,422.55 1681.54,423.01 1683.19,423.38 C1684.94,423.74 1686.23,424.30 1686.23,425.68 C1686.23,427.06 1684.94,427.52 1683.01,427.52 C1681.72,427.52 1680.52,427.15 1679.79,426.60" fill="none" stroke="#6a74cc" stroke-width="2.6"/><rect x="1702.3" y="414.90000000000003" width="16.4" height="16.5" rx="2.2" fill="#959ddc"/><path d="M1704.5,428.50000000000006 L1707.3999999999999,425.00000000000006 L1709.5,426.90000000000003 L1712.8,423.40000000000003 L1716.3999999999999,428.50000000000006 Z" fill="#6a74cc"/><clipPath id="mc18172_4231"><rect x="1817.2" y="415.20000000000005" width="16.5" height="15.8" rx="2.6"/></clipPath><g clip-path="url(#mc18172_4231)"><rect x="1817.2" y="415.20000000000005" width="16.5" height="4.1" fill="#e4e5ee"/><rect x="1817.2" y="421.05000000000007" width="16.5" height="4.1" fill="#e1e2eb"/><rect x="1817.2" y="426.90000000000003" width="16.5" height="4.1" fill="#e1e2eb"/></g><text transform="translate(1683.04,464.8) scale(0.9600,1)" x="0" y="0" font-family="'Liberation Sans', sans-serif" font-size="15" font-weight="400" fill="#dcdcdc">Surface</text><circle cx="1666.8" cy="458.7" r="6.7" fill="#d4c24a"/><text transform="translate(1683.01,491.90000000000003) scale(0.9889,1)" x="0" y="0" font-family="'Liberation Sans', sans-serif" font-size="15" font-weight="400" fill="#dcdcdc">Displacement</text><circle cx="1666.8" cy="485.8" r="6.7" fill="#a67be0"/><text transform="translate(1684.00,519.4) scale(0.9860,1)" x="0" y="0" font-family="'Liberation Sans', sans-serif" font-size="15" font-weight="400" fill="#dcdcdc">Volume</text><circle cx="1666.8" cy="513.3" r="6.7" fill="#d4c24a"/><text transform="translate(1683.00,546.7) scale(0.9952,1)" x="0" y="0" font-family="'Liberation Sans', sans-serif" font-size="15" font-weight="400" fill="#dcdcdc">Environment</text><circle cx="1666.8" cy="540.6" r="6.7" fill="#d4c24a"/><text transform="translate(1683.01,573.7) scale(0.9906,1)" x="0" y="0" font-family="'Liberation Sans', sans-serif" font-size="15" font-weight="400" fill="#dcdcdc">Light</text><circle cx="1666.8" cy="567.6" r="6.7" fill="#d4c24a"/><text transform="translate(1682.97,601.4) scale(1.0250,1)" x="0" y="0" font-family="'Liberation Sans', sans-serif" font-size="15" font-weight="400" fill="#dcdcdc">Contour</text><circle cx="1666.8" cy="595.3" r="6.7" fill="#d4c24a"/><text transform="translate(1684.00,629.0) scale(1.0138,1)" x="0" y="0" font-family="'Liberation Sans', sans-serif" font-size="15" font-weight="400" fill="#dcdcdc">Viewport</text><circle cx="1666.8" cy="622.9" r="6.7" fill="#d4c24a"/><text transform="translate(1683.02,656.3000000000001) scale(0.9816,1)" x="0" y="0" font-family="'Liberation Sans', sans-serif" font-size="15" font-weight="400" fill="#dcdcdc">UV Context</text><circle cx="1666.8" cy="650.2" r="6.7" fill="#6a9fd4"/><polyline points="1157.20,729.15 1157.95,729.07 1158.70,728.83 1159.45,728.48 1160.20,728.08 1160.95,727.70 1161.70,727.41 1162.45,727.26 1163.20,727.28 1163.95,727.46 1164.70,727.77 1165.45,728.16 1166.20,728.55 1166.95,728.89 1167.70,729.10 1168.45,729.15 1169.20,729.03 1169.95,728.76 1170.70,728.40 1171.45,728.00 1172.20,727.64 1172.95,727.37 1173.70,727.25 1174.45,727.30 1175.20,727.51 1175.95,727.85 1176.70,728.24 1177.45,728.63 1178.20,728.94 1178.95,729.12 1179.70,729.14" fill="none" stroke="#e6c41e" stroke-width="2.2" stroke-linejoin="round"/><polyline points="1157.20,734.25 1157.95,734.17 1158.70,733.93 1159.45,733.58 1160.20,733.18 1160.95,732.80 1161.70,732.51 1162.45,732.36 1163.20,732.38 1163.95,732.56 1164.70,732.87 1165.45,733.26 1166.20,733.65 1166.95,733.99 1167.70,734.20 1168.45,734.25 1169.20,734.13 1169.95,733.86 1170.70,733.50 1171.45,733.10 1172.20,732.74 1172.95,732.47 1173.70,732.35 1174.45,732.40 1175.20,732.61 1175.95,732.95 1176.70,733.34 1177.45,733.73 1178.20,734.04 1178.95,734.22 1179.70,734.24" fill="none" stroke="#c4c4c4" stroke-width="2.2" stroke-linejoin="round"/><polyline points="1157.20,739.35 1157.95,739.27 1158.70,739.03 1159.45,738.68 1160.20,738.28 1160.95,737.90 1161.70,737.61 1162.45,737.46 1163.20,737.48 1163.95,737.66 1164.70,737.97 1165.45,738.36 1166.20,738.75 1166.95,739.09 1167.70,739.30 1168.45,739.35 1169.20,739.23 1169.95,738.96 1170.70,738.60 1171.45,738.20 1172.20,737.84 1172.95,737.57 1173.70,737.45 1174.45,737.50 1175.20,737.71 1175.95,738.05 1176.70,738.44 1177.45,738.83 1178.20,739.14 1178.95,739.32 1179.70,739.34" fill="none" stroke="#c4c4c4" stroke-width="2.2" stroke-linejoin="round"/><polyline points="1157.20,744.45 1157.95,744.37 1158.70,744.13 1159.45,743.78 1160.20,743.38 1160.95,743.00 1161.70,742.71 1162.45,742.56 1163.20,742.58 1163.95,742.76 1164.70,743.07 1165.45,743.46 1166.20,743.85 1166.95,744.19 1167.70,744.40 1168.45,744.45 1169.20,744.33 1169.95,744.06 1170.70,743.70 1171.45,743.30 1172.20,742.94 1172.95,742.67 1173.70,742.55 1174.45,742.60 1175.20,742.81 1175.95,743.15 1176.70,743.54 1177.45,743.93 1178.20,744.24 1178.95,744.42 1179.70,744.44" fill="none" stroke="#c4c4c4" stroke-width="2.2" stroke-linejoin="round"/><text transform="translate(1184.51,744.7) scale(0.9921,1)" x="0" y="0" font-family="'Liberation Sans', sans-serif" font-size="19" font-weight="400" fill="#fafafa">Displacement</text><clipPath id="dpc"><rect x="1152.1" y="751.5" width="174.9" height="136.4" rx="10"/></clipPath><g clip-path="url(#dpc)"><rect x="1152" y="751" width="176" height="33.6" fill="#9a8428"/><rect x="1152" y="784.6" width="176" height="104" fill="#313131"/></g><circle cx="1168.2" cy="768.2" r="9" fill="#b3a35e"/><path d="M1171.24,764.61 C1170.50,764.06 1169.40,763.88 1168.29,763.88 C1166.27,763.88 1165.16,764.89 1165.16,766.08 C1165.16,767.65 1166.64,768.11 1168.29,768.48 C1170.04,768.84 1171.33,769.40 1171.33,770.78 C1171.33,772.16 1170.04,772.62 1168.11,772.62 C1166.82,772.62 1165.62,772.25 1164.89,771.70" fill="none" stroke="#9a8428" stroke-width="2.6"/><clipPath id="mc13026_7680"><rect x="1302.6" y="760.1" width="16.5" height="15.8" rx="2.6"/></clipPath><g clip-path="url(#mc13026_7680)"><rect x="1302.6" y="760.1" width="16.5" height="4.1" fill="#e5e2d5"/><rect x="1302.6" y="765.95" width="16.5" height="4.1" fill="#e2dfd1"/><rect x="1302.6" y="771.8000000000001" width="16.5" height="4.1" fill="#e2dfd1"/></g><text transform="translate(1288.40,809.6) scale(1.0429,1)" x="0" y="0" font-family="'Liberation Sans', sans-serif" font-size="15" font-weight="400" fill="#dcdcdc">out</text><circle cx="1326.9" cy="803.5" r="6.7" fill="#a67be0"/><text transform="translate(1185.50,836.5) scale(0.9868,1)" x="0" y="0" font-family="'Liberation Sans', sans-serif" font-size="15" font-weight="700" fill="#e4e4e4">Texture</text><path d="M1167,827.9 L1171.15,831.9 L1175.3,827.9" fill="none" stroke="#a8a8a8" stroke-width="1.3"/><path d="M1170.8,837.5 L1170.8,849.9 Q1170.8,857.9 1178.8,857.9 L1187.5,857.9" fill="none" stroke="#585858" stroke-width="1.3"/><circle cx="1187.5" cy="857.9" r="1.9" fill="#585858"/><text transform="translate(1201.20,865.1) scale(0.9808,1)" x="0" y="0" font-family="'Liberation Sans', sans-serif" font-size="15" font-weight="400" fill="#dcdcdc">TexMap</text><circle cx="1152.1" cy="857.9" r="6.7" fill="#d4c24a"/></svg></body></html>
